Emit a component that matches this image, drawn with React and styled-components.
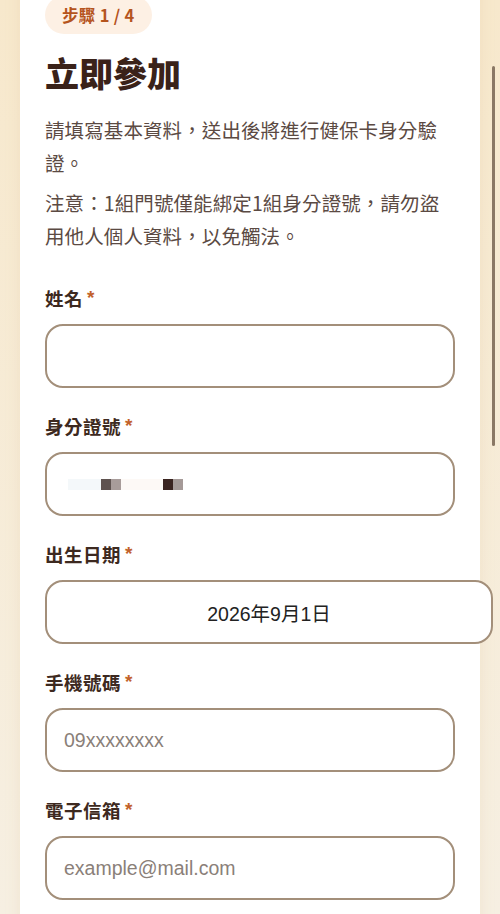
import styled, { createGlobalStyle, css } from "styled-components";

const GlobalStyle = createGlobalStyle`
  html, body {
    margin: 0;
    padding: 0;
    height: 100%;
    overflow: hidden;
  }
  body {
    background: linear-gradient(to bottom, #f7e8cc, #f6efe2);
    font-family: "Noto Sans CJK TC", "Noto Sans", sans-serif;
  }
`;

const fields = [
  { label: "姓名", kind: "text" },
  { label: "身分證號", kind: "masked" },
  { label: "出生日期", kind: "date", value: "2026年9月1日" },
  { label: "手機號碼", kind: "text", placeholder: "09xxxxxxxx" },
  { label: "電子信箱", kind: "text", placeholder: "example@mail.com" },
];

const App = () => {
  return (
    <>
      <GlobalStyle />
      <Page>
        <Card>
          <StepBadge>步驟 1 / 4</StepBadge>
          <Title>立即參加</Title>
          <Intro>
            <Paragraph>請填寫基本資料，送出後將進行健保卡身分驗證。</Paragraph>
            <Paragraph>
              注意：1組門號僅能綁定1組身分證號，請勿盜用他人個人資料，以免觸法。
            </Paragraph>
          </Intro>

          <Form>
            {fields.map((f) => (
              <Field key={f.label}>
                <Label>
                  {f.label}
                  <Required>*</Required>
                </Label>
                {f.kind === "masked" ? (
                  <MaskedBox>
                    <Pixel $color="#f4f8fa" $w={33} />
                    <Pixel $color="#5f5350" />
                    <Pixel $color="#a89c9a" />
                    <Pixel $color="#fdf9f6" $w={42} />
                    <Pixel $color="#3a2420" />
                    <Pixel $color="#a59a98" />
                  </MaskedBox>
                ) : f.kind === "date" ? (
                  <TextInput $wide $center readOnly value={f.value} />
                ) : (
                  <TextInput placeholder={f.placeholder || ""} />
                )}
              </Field>
            ))}
          </Form>
        </Card>
      </Page>
      <ScrollThumb />
    </>
  );
};

export default App;

const Page = styled.div`
  padding: 0 20px;
  margin-top: -20px;
`;

const Card = styled.div`
  background: #fff;
  padding: 16px 25px 60px;
  box-shadow: 0 0 14px rgba(214, 180, 130, 0.18);
  min-height: 1000px;
`;

const StepBadge = styled.div`
  display: inline-block;
  height: 38px;
  line-height: 38px;
  padding: 0 17px;
  border-radius: 19px;
  background: #fdf0e4;
  color: #b5541d;
  font-size: 16.5px;
  font-weight: 700;
  letter-spacing: 0.3px;
`;

const Title = styled.h1`
  margin: 17px 0 0;
  font-size: 34px;
  line-height: 44px;
  font-weight: 900;
  color: #3a2219;
`;

const Intro = styled.div`
  margin-top: 18px;
  padding-right: 8px;
  display: flex;
  flex-direction: column;
  gap: 7px;
`;

const Paragraph = styled.p`
  margin: 0;
  font-size: 19.5px;
  letter-spacing: 0.1px;
  line-height: 33px;
  color: #5b4a43;
`;

const Form = styled.div`
  margin-top: 34px;
  display: flex;
  flex-direction: column;
  gap: 26px;
`;

const Field = styled.div`
  display: flex;
  flex-direction: column;
  gap: 14px;
`;

const Label = styled.label`
  display: flex;
  align-items: center;
  height: 24px;
  font-size: 18.5px;
  letter-spacing: 0.5px;
  font-weight: 700;
  color: #3d2920;
`;

const Required = styled.span`
  margin-left: 4px;
  color: #c2622b;
  font-family: "Liberation Sans", sans-serif;
  font-size: 19px;
  font-weight: 700;
`;

const boxStyle = css`
  box-sizing: border-box;
  height: 64px;
  border: 2px solid #a38f7a;
  border-radius: 18px;
  background: #fff;
`;

const TextInput = styled.input`
  ${boxStyle};
  width: ${(p) => (p.$wide ? "calc(100% + 38px)" : "100%")};
  padding: 0 17px;
  font-family: "Liberation Sans", "Noto Sans CJK TC", sans-serif;
  font-size: 19.5px;
  color: #222;
  text-align: ${(p) => (p.$center ? "center" : "left")};
  outline: none;

  &::placeholder {
    color: #8a8079;
  }
`;

const MaskedBox = styled.div`
  ${boxStyle};
  display: flex;
  align-items: center;
  padding: 0 0 0 21px;
`;

const Pixel = styled.span`
  display: block;
  width: ${(p) => p.$w || 10}px;
  height: 11px;
  background: ${(p) => p.$color};
`;

const ScrollThumb = styled.div`
  position: fixed;
  top: 66px;
  right: 5px;
  width: 3px;
  height: 380px;
  border-radius: 2px;
  background: #8a7865;
`;
